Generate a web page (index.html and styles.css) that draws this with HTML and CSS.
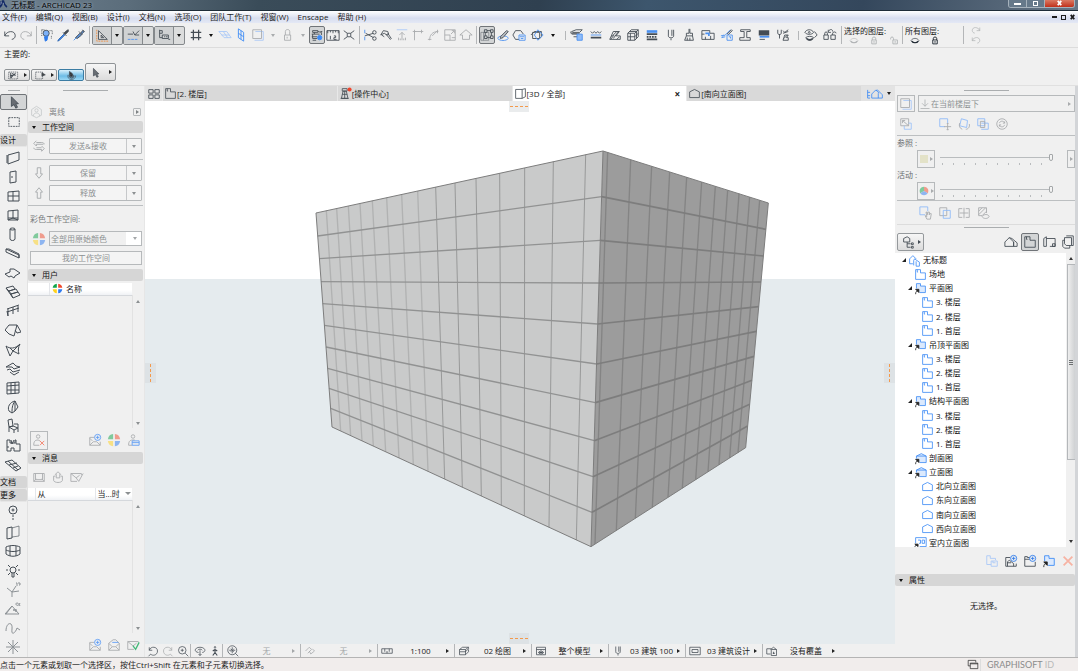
FILE: index.html
```html
<!DOCTYPE html>
<html lang="zh-CN">
<head>
<meta charset="utf-8">
<title>无标题 - ARCHICAD 23</title>
<link rel="stylesheet" href="styles.css">
</head>
<body>
<svg class="sprite" aria-hidden="true">
  <defs>
    <symbol id="undo" viewBox="0 0 16 16"><path d="M2 4v5h5M2 9c2-6 12-7 12 0 0 2-2 4-4 4"/></symbol>
    <symbol id="redo" viewBox="0 0 16 16"><path d="M14 4v5H9M14 9C12 3 2 2 2 9c0 2 2 4 4 4"/></symbol>
    <symbol id="find" viewBox="0 0 16 16"><path d="M2 2h3M11 3h3v4M2 2v8M13 9v4" stroke-dasharray="1 1"/><circle cx="7" cy="6" r="3.500" fill="#7db1f7"/><path d="M5 10l4-1-1 5-2 1z" fill="#2f7bea" stroke="#2f7bea"/></symbol>
    <symbol id="dropper" viewBox="0 0 16 16"><path d="M3 13l6-6 1 1-6 6-2 1z" fill="#3b8af5" stroke="#2a62ad"/><path d="M8 5l4 4M9 6l3-3 2-1v2l-3 3z" fill="#444c54"/></symbol>
    <symbol id="syringe" viewBox="0 0 16 16"><path d="M2 14l3-3" stroke="#3b8af5"/><path d="M4 11l5-5 2 2-5 4zM8 4l4 4M10 6l2-3 2 1-3 3M12 2l2 2" fill="#5b8fd4"/></symbol>
    <symbol id="setsquare" viewBox="0 0 16 16"><path d="M4 3v10h10zM7 8v3h3z" fill="#dddddd"/><path d="M2 2v13h13" stroke="#f28c3c" stroke-dasharray="2 1"/></symbol>
    <symbol id="snapline" viewBox="0 0 16 16"><path d="M2 7h6M8 4l2 4 5-5M10 8h5"/><path d="M2 13h12" stroke="#4a90f0" stroke-dasharray="3 1"/></symbol>
    <symbol id="coord" viewBox="0 0 16 16"><path d="M3 2v9h3M3 3h3v3H3M6 8h7v4H6zM8 10h1M10 10h2"/><path d="M13 13h2"/></symbol>
    <symbol id="grid" viewBox="0 0 16 16"><path d="M5 2v12M11 2v12M2 5h12M2 11h12" stroke-width="1.4"/></symbol>
    <symbol id="planeh" viewBox="0 0 16 16"><path d="M1 4h9l5 7H7zM4 8h9M6 4l5 7"/></symbol>
    <symbol id="planev" viewBox="0 0 16 16"><path d="M5 1l6 4v10l-6-4zM8 3v10M5 6l6 4"/></symbol>
    <symbol id="trace" viewBox="0 0 16 16"><path d="M5 4h9v10H4" stroke="#a9c8f7"/><path d="M2 2h10v10H2z"/></symbol>
    <symbol id="lock" viewBox="0 0 16 16"><path d="M4 8h7v6H4zM5 8V4c0-3 5-3 5 0v4M7 10v2"/></symbol>
    <symbol id="gravity" viewBox="0 0 16 16"><path d="M3 3h6v2H3zM9 4l4 1v3M2 7h9M3 7v5h5M2 10h6M5 5v2M12 4h2M3 14h4"/><circle cx="11" cy="11" r="2.500" fill="#3b8af5" stroke="#3b8af5"/></symbol>
    <symbol id="ruler" viewBox="0 0 16 16"><path d="M1 3h14M2 3v3M5 3v2M8 3v3M11 3v2M14 3v3M1 3v11h14V3M5 9v4M9 9h2v2H9v2h3"/></symbol>
    <symbol id="intersect" viewBox="0 0 16 16"><path d="M2 3l4 3M14 3l-4 3M2 13l4-3M14 13l-4-3M6 6h4v4H6z"/></symbol>
    <symbol id="scissors" viewBox="0 0 16 16"><path d="M2 2v4M2 10v4" stroke="#4a90f0"/><path d="M2 9l10-3M3 6l9 5"/><circle cx="13" cy="5" r="2"/><circle cx="13" cy="12" r="2"/></symbol>
    <symbol id="axe" viewBox="0 0 16 16"><path d="M2 8l3-5 5 1 1 3-2 1-3-2zM8 7l5 6 1-1-4-6M3 8l3 2"/></symbol>
    <symbol id="raise" viewBox="0 0 16 16"><path d="M2 2h12" stroke="#a9c8f7"/><path d="M8 14V5M5 8l3-3 3 3M4 14v-3M12 14v-3M6 14v-2M10 14v-2"/></symbol>
    <symbol id="corner" viewBox="0 0 16 16"><path d="M4 14V4h10M2 4h4M4 2v4M12 2v4"/></symbol>
    <symbol id="fillet" viewBox="0 0 16 16"><path d="M3 14C3 8 6 4 13 4M1 13h4M12 2v4M6 9l6-6"/></symbol>
    <symbol id="resize" viewBox="0 0 16 16"><path d="M2 2h12v12H2zM2 8h6v6M9 7l4-4M10 3h3v3M10 11h4"/></symbol>
    <symbol id="house" viewBox="0 0 16 16"><path d="M4 13V8H1l7-6 7 6h-3v5H4z"/></symbol>
    <symbol id="group" viewBox="0 0 16 16"><path d="M5 2h3v3H5zM12 2h3v3h-3zM5 9h3v3H5zM12 9h3v3h-3zM8 3h4M8 11h4M6 5v4M13 5v4"/><path d="M1 5h9v9H1zM4 5v9" opacity=".5"/></symbol>
    <symbol id="pencil3d" viewBox="0 0 16 16"><path d="M2 12c0-4 12-4 12 0M2 12c2 3 10 3 12 0" stroke="#4a90f0"/><path d="M5 10l7-7 2 1-6 7-3 1z" fill="#b8bcc0"/></symbol>
    <symbol id="polyinfo" viewBox="0 0 16 16"><path d="M8 13H4L1 8l3-5h6l3 4"/><path d="M8 8h7v6H8zM9 10h5M10 12h3" stroke="#4a90f0"/></symbol>
    <symbol id="modeldiamond" viewBox="0 0 16 16"><path d="M3 5h8v7H3zM1 8l4-4h8v6l-3 3"/><path d="M9 2l6 6-6 6-4-6z" stroke="#4a90f0"/></symbol>
    <symbol id="layers" viewBox="0 0 16 16"><path d="M2 4l5-2h7l-3 3H3zM2 7h6M4 10h4M1 4v2h10"/><path d="M8 7h6v7H8z" fill="#8fbcf9" stroke="#4a90f0"/></symbol>
    <symbol id="linetypes" viewBox="0 0 16 16"><path d="M2 4l2 2 2-2 2 2 2-2 2 2 2-2"/><path d="M2 8h12" stroke="#4a90f0"/><path d="M2 11h12" stroke-width="2"/></symbol>
    <symbol id="hatch" viewBox="0 0 16 16"><path d="M2 13l4-9h7l-4 5h5v4zM4 10l6-6M6 12l6-8M10 13l3-3M3 13l4-5"/></symbol>
    <symbol id="cube3" viewBox="0 0 16 16"><path d="M2 6l4-4h8v8l-4 4H2zM2 6h8v8M10 6l4-4M5 6v8M2 10h8l4-4M4 4h8v8"/></symbol>
    <symbol id="composite" viewBox="0 0 16 16"><path d="M2 4h12" stroke="#4a90f0" stroke-width="3"/><path d="M2 7h12M2 13h12" stroke-width="2"/><path d="M2 10h12" stroke-width="2" stroke-dasharray="2 1"/></symbol>
    <symbol id="pens" viewBox="0 0 16 16"><path d="M5 2v7c0 3 6 3 6 0V2M9 2v7M8 12v2"/></symbol>
    <symbol id="brush" viewBox="0 0 16 16"><path d="M8 1v5H5v3h7V6H9V1M5 9l-2 5h10l-1-5M6 14v-3M9 14v-3"/></symbol>
    <symbol id="zones" viewBox="0 0 16 16"><path d="M1 3h9v3h5v7H1zM1 7h3M5 13v-3M11 9v4"/><path d="M5 6h4v3" stroke="#4a90f0" stroke-width="2"/></symbol>
    <symbol id="markup" viewBox="0 0 16 16"><path d="M1 9l4-1-3 3 4-1M12 2L5 9" stroke="#4a90f0"/><path d="M8 7l5-5 1 1-5 5"/><path d="M8 8h6v6H8zM10 10h2v2" stroke="#4a90f0"/></symbol>
    <symbol id="beamprofile" viewBox="0 0 16 16"><path d="M3 2h11v2h-4v7h4v3H2v-3h5V4H3z"/></symbol>
    <symbol id="schedule" viewBox="0 0 16 16"><path d="M2 4h12M2 7h12" stroke-width="3"/><path d="M3 10h11" stroke="#4a90f0" stroke-width="2"/><path d="M3 13h6"/></symbol>
    <symbol id="override" viewBox="0 0 16 16"><path d="M2 2v4c0 2 4 2 4 0V2M4 7v5M8 3l2 2 4-3M8 6l6-2M8 14l2-6h4l-2 3h2v3zM9 12l4-4"/></symbol>
    <symbol id="eyecycle" viewBox="0 0 16 16"><path d="M1 5c2-4 8-4 10 0-2 3-8 3-10 0z"/><circle cx="6" cy="5" r="1"/><path d="M2 11c2 4 7 4 9 0-2-2-7-2-9 0zM12 4l3 4-3 3"/><path d="M3 12c2 2 5 2 7 0" stroke-width="2"/></symbol>
    <symbol id="lockcycle" viewBox="0 0 16 16"><path d="M1 8h5v5H1zM2 8V6c0-2 3-2 3 0v2M6 4c2-3 5-3 5 0M9 8h5v5H9zM11 8V6c0-2 4-2 4 0M6 2v3h3"/></symbol>
    <symbol id="eyeflat" viewBox="0 0 16 16"><path d="M1 8c3-5 11-5 14 0-3 5-11 5-14 0z"/><path d="M2 9c3 4 9 4 12 0" stroke-width="2"/></symbol>
    <symbol id="locksm" viewBox="0 0 16 16"><path d="M4 7h8v7H4zM5 7V4c0-3 6-3 6 0v3M8 9v3" stroke-width="1.6"/></symbol>
    <symbol id="unlocksm" viewBox="0 0 16 16"><path d="M6 7h8v7H6zM7 7V4c0-3-5-3-5 0v2M10 9v3" stroke-width="1.6"/></symbol>
    <symbol id="arrow" viewBox="0 0 16 16"><path d="M5 2v11l3-2 2 4 2-1-2-4h3z" fill="#686d73"/></symbol>
    <symbol id="marquee" viewBox="0 0 16 16"><path d="M2 3h12v10H2z" stroke-dasharray="2 1"/></symbol>
    <symbol id="selrect" viewBox="0 0 16 16"><path d="M1 3h13v10H1z" stroke-dasharray="2 1"/><path d="M4 4v8M6 5l5 3M4 12l3-4 4-3M3 8h4" stroke-width="1.500"/></symbol>
    <symbol id="selpoly" viewBox="0 0 16 16"><path d="M1 3h10v10H1z" stroke-dasharray="2 1"/><path d="M10 4l5 3-5 2z" fill="#444"/></symbol>
    <symbol id="orbit" viewBox="0 0 16 16"><path d="M3 7c-2 9 11 9 11 1M4 8c2 5 8 4 8 0"/><path d="M5 2l4 3 1 4-3 1-2-3z" fill="#333"/><circle cx="8" cy="9" r="3"/></symbol>
    <symbol id="wall" viewBox="0 0 16 16"><path d="M3 5l11-3v8L3 14zM2 5v8"/></symbol>
    <symbol id="door" viewBox="0 0 16 16"><path d="M5 3l6-1v11l-6 1zM6 8h2"/></symbol>
    <symbol id="window" viewBox="0 0 16 16"><path d="M3 4l11-1v10H3zM8 3v10M3 8h11"/></symbol>
    <symbol id="skylight" viewBox="0 0 16 16"><path d="M3 4l10-1v10H3zM8 3v8l-5 2M8 11l5 2M3 11h10"/></symbol>
    <symbol id="column" viewBox="0 0 16 16"><path d="M5 3v10c0 2 5 2 5 0V3"/><ellipse cx="7.500" cy="3" rx="2.500" ry="1"/></symbol>
    <symbol id="beam" viewBox="0 0 16 16"><path d="M1 3v3l13 6v-3zM1 3h3l10 5v4"/></symbol>
    <symbol id="slab" viewBox="0 0 16 16"><path d="M0 9l5-2V4h4l6 4-5 3-1 2-3-2-2 1z"/></symbol>
    <symbol id="stair" viewBox="0 0 16 16"><path d="M1 4l7-2 2 3-6 2zM4 7l7-2 2 3-7 2zM6 10l7-2 2 3-7 3zM1 4l7 10"/></symbol>
    <symbol id="railing" viewBox="0 0 16 16"><path d="M2 6l12-4M2 9l12-4M3 6v7M8 4v7M13 3v6M2 8l1 5"/></symbol>
    <symbol id="roof" viewBox="0 0 16 16"><path d="M0 8l4-5h8L9 14 4 12zM12 3l4 7-4 1-2-3"/></symbol>
    <symbol id="shell" viewBox="0 0 16 16"><path d="M1 4c4 3 9 3 14-2-2 3-2 7-1 10L8 9l-3 5zM5 6l3 3 7-7"/></symbol>
    <symbol id="morph" viewBox="0 0 16 16"><path d="M1 6l7-4 3 3 4 1-6 2-2-2zM2 9l3-1 3 3 7-2M5 11l4 3 5-3M7 6l2 2"/></symbol>
    <symbol id="curtain" viewBox="0 0 16 16"><path d="M2 3l12-1v11l-12 1zM6 3v11M10 2v12M2 6l12-1M2 10h12"/></symbol>
    <symbol id="mesh" viewBox="0 0 16 16"><path d="M4 12C2 8 5 3 10 2l3 6-3 4-3 2zM10 2c-3 4-3 8-3 12M10 2v10"/></symbol>
    <symbol id="chair" viewBox="0 0 16 16"><path d="M3 2l4-1 1 7-4 1zM4 9v5M4 9l4-1 5 2-4 2zM9 12v3M13 10v4M9 6h4v4"/></symbol>
    <symbol id="zone" viewBox="0 0 16 16"><path d="M2 2h3v3h5V2h1v4h4v7H9v-3H6v3H2zM2 9h2"/><path d="M6 2l1 4 2-4"/></symbol>
    <symbol id="terrain" viewBox="0 0 16 16"><path d="M0 5l7-2 9 8-5 3zM3 4l10 9M4 8l8-2M8 11l5-2"/></symbol>
    <symbol id="section" viewBox="0 0 16 16"><circle cx="8" cy="5" r="4"/><circle cx="8" cy="5" r="1"/><path d="M8 10v6" stroke-dasharray="2 1"/></symbol>
    <symbol id="elevation" viewBox="0 0 16 16"><path d="M2 4l5-1v11l-5 1z"/><path d="M7 4l7-2v10l-7 1" opacity=".6"/></symbol>
    <symbol id="iet" viewBox="0 0 16 16"><path d="M1 4c4-2 10-2 14 0v7c-4 3-10 3-14 0zM5 3v10M11 3v10M1 7c4 2 10 2 14 0"/></symbol>
    <symbol id="lamp" viewBox="0 0 16 16"><circle cx="8" cy="7" r="3"/><path d="M7 10v4h2v-4M1 7h2M13 7h2M3 2l2 2M13 2l-2 2M3 12l2-2M13 12l-2-2"/></symbol>
    <symbol id="leveldim" viewBox="0 0 16 16"><path d="M2 6l5 4 7-1M7 10v5M7 10l4-6M11 1h1v3M13 1h2v2h-1"/></symbol>
    <symbol id="angledim" viewBox="0 0 16 16"><path d="M0 13h14L7 5zM1 13l6-8M11 3c0-2 3-1 4 2M15 2c-1 3-4 3-4 1"/><path d="M8 9h3v2" stroke-width="1.500"/></symbol>
    <symbol id="spline" viewBox="0 0 16 16"><path d="M1 11c0-9 7-10 6-2s4 3 5-1l3 2"/></symbol>
    <symbol id="hotspot" viewBox="0 0 16 16"><path d="M8 1v14M1 8h14M3 3l10 10M13 3L3 13"/></symbol>
    <symbol id="person" viewBox="0 0 16 16"><path d="M8 1l6 4v7l-6 3-6-3V5z"/><circle cx="8" cy="6" r="2"/><path d="M4 13c0-5 8-5 8 0"/></symbol>
    <symbol id="swap" viewBox="0 0 16 16"><path d="M5 2L2 5l3 3V6h8M5 4h6c2 0 3 1 3 2M11 8l3 3-3 3v-2H5c-2 0-3-1-3-2M11 10H5"/></symbol>
    <symbol id="down" viewBox="0 0 16 16"><path d="M6 2h4v7h2l-4 5-4-5h2z"/></symbol>
    <symbol id="up" viewBox="0 0 16 16"><path d="M6 14h4V7h2L8 2 4 7h2z"/></symbol>
    <symbol id="wheel" viewBox="0 0 16 16"><g stroke="none"><path d="M7 7V1a7 7 0 0 0-6 6z" fill="#12a54a"/><path d="M9 7V1a7 7 0 0 1 6 6z" fill="#ef4a2c"/><path d="M7 9v6a7 7 0 0 1-6-6z" fill="#ffd21c"/><path d="M9 9v6a7 7 0 0 0 6-6z" fill="#2f7bf0"/></g></symbol>
    <symbol id="pie" viewBox="0 0 16 16"><g stroke="none"><path d="M8 8V1a7 7 0 0 0-6 10.500z" fill="#12a54a"/><path d="M8 8V1a7 7 0 0 1 6 10.500z" fill="#ef4a2c"/><path d="M8 8l-6 3.500a7 7 0 0 0 12 0z" fill="#2f7bf0"/></g></symbol>
    <symbol id="personx" viewBox="0 0 16 16"><circle cx="7" cy="4" r="2"/><path d="M8 14H2c0-4 1-6 5-6l2 1"/><path d="M9 9l5 5M14 9l-5 5" stroke="#f37a62"/></symbol>
    <symbol id="mailplus" viewBox="0 0 16 16"><path d="M7 5H2v9h12v-4M2 14l4-4h4l4 4M2 6l3 3"/><circle cx="11" cy="5" r="3.500" stroke="#5d9cf5"/><path d="M9 5h4M11 3v4" stroke="#5d9cf5"/></symbol>
    <symbol id="personcard" viewBox="0 0 16 16"><circle cx="8" cy="4" r="2"/><path d="M7 14H3c0-4 1-6 5-6h2"/><path d="M7 9h8v5H7zM7 11h8" stroke="#5d9cf5"/></symbol>
    <symbol id="mail" viewBox="0 0 16 16"><path d="M2 4h12v9H2zM4 4v7h8V4M2 13l3-3M14 13l-3-3"/></symbol>
    <symbol id="mailup" viewBox="0 0 16 16"><path d="M3 7h2M11 7h2v5c-1 3-9 3-10 0V7M8 2L5 5h1v4h4V5h1z"/></symbol>
    <symbol id="mailcheck" viewBox="0 0 16 16"><path d="M13 6V4H1v9h7M1 4l6 5 4-3"/><path d="M7 9l3 4 5-9"/></symbol>
    <symbol id="mailopen" viewBox="0 0 16 16"><path d="M2 6l5-4h3l4 4v8H2zM2 6l4 4h4l4-4M2 14l4-4M14 14l-4-4"/><path d="M6 5h7" stroke="#5d9cf5"/></symbol>
    <symbol id="mailok" viewBox="0 0 16 16"><path d="M14 5V4H2v9h7M2 4l6 5 4-3"/><path d="M8 9l3 4 4-8" stroke="#44b878" stroke-width="1.500"/></symbol>
    <symbol id="tiles" viewBox="0 0 16 16"><path d="M2 3h5v4H2zM9 3h5v4H9zM2 9h5v4H2zM9 9h5v4H9z"/></symbol>
    <symbol id="plan" viewBox="0 0 16 16"><path d="M2 2h6v4h6v8H2zM4 2v3h1"/></symbol>
    <symbol id="tower" viewBox="0 0 16 16"><path d="M5 5l-2 9h8L9 5zM4 2h6v3H4zM7 5v9M4 9h6M2 14h10"/><circle cx="13" cy="3" r="2.500" fill="#f0452c" stroke="none"/></symbol>
    <symbol id="box3d" viewBox="0 0 16 16"><path d="M2 3h8v11H2zM10 3l4-1v10l-4 2"/></symbol>
    <symbol id="facade" viewBox="0 0 16 16"><path d="M2 13V6l6-3 6 3v7z"/></symbol>
    <symbol id="homes" viewBox="0 0 22 16"><path d="M2 3v10h3M2 6h3M2 10h3M7 13V8l5-5 4 4M7 13h13V9l-6-6-2 1M15 7v6"/></symbol>
    <symbol id="drop" viewBox="0 0 16 16"><path d="M8 2v9M4 7l4 4 4-4M2 14h12"/></symbol>
    <symbol id="expand" viewBox="0 0 16 16"><path d="M2 2h9v8H2zM4 4l7 6M4 4h3M4 4v3"/><path d="M6 10v4h8V7h-3" stroke="#9dc2f8"/></symbol>
    <symbol id="moveref" viewBox="0 0 16 16"><path d="M8 11H2V2h9v5" stroke="#8eb9f8"/><path d="M11 7v8M7 11h8M10 8l1-1 1 1M10 14l1 1 1-1"/></symbol>
    <symbol id="rotref" viewBox="0 0 16 16"><path d="M5 2l7 2-1 8-8-2z" stroke="#8eb9f8"/><path d="M10 14c3 0 5-3 4-6M3 7c-1 3 0 6 3 7"/></symbol>
    <symbol id="copyref" viewBox="0 0 16 16"><path d="M2 2h8v8H2zM6 7h8v7H6" stroke="#8eb9f8"/><path d="M5 5h5v7H5z"/></symbol>
    <symbol id="refresh" viewBox="0 0 16 16"><circle cx="8" cy="8" r="6"/><path d="M5 7c1-3 5-3 6 0M11 5v2H9M11 9c-1 3-5 3-6 0M5 11V9h2"/></symbol>
    <symbol id="handref" viewBox="0 0 16 16"><path d="M7 10H1V1h9v5" stroke="#8eb9f8"/><path d="M7 11l2 4h4l1-6-1-1-1 2V7h-2v3L9 7H8l1 5z"/></symbol>
    <symbol id="overlap" viewBox="0 0 16 16"><path d="M2 2h8v9H2z"/><path d="M6 5h8v9H6z" stroke="#8eb9f8"/></symbol>
    <symbol id="split" viewBox="0 0 16 16"><path d="M6 3H2v10h4M10 3h4v10h-4M8 2v12M3 8h10"/></symbol>
    <symbol id="masked" viewBox="0 0 16 16"><path d="M3 2h9v6M3 2v9h4M3 6l4-4M3 10l8-8M12 6l-5 5M7 12c2-3 7-3 8 0-1 3-7 3-8 0z"/></symbol>
    <symbol id="navtree" viewBox="0 0 16 16"><path d="M3 8V4l4-2 3 2v4zM7 8v6h4M7 10h4M12 9h2v2h-2zM12 13h2v2h-2z"/></symbol>
    <symbol id="projmap" viewBox="0 0 16 16"><path d="M1 13V8l5-5 5 5v5zM6 3l3 1 6 5v4h-4M11 8v5"/></symbol>
    <symbol id="layout" viewBox="0 0 16 16"><path d="M5 13H2V4l3-2v11M5 4h10v9H9M12 13h3v-3h-3z"/></symbol>
    <symbol id="publish" viewBox="0 0 16 16"><path d="M4 3h8v9H6L4 10zM6 1h8v11h-2M4 6H2v7l2 2h6v-3"/></symbol>
    <symbol id="project" viewBox="0 0 16 16"><path d="M2 12V6l4-4 4 4M2 12h4M7 14V8l1-2 6 4v5h-4V9"/></symbol>
    <symbol id="folderplan" viewBox="0 0 16 16"><path d="M3 8V2h5v3h6v8H7" fill="#dbe9fd"/><path d="M2 15c0-3 1-4 3-4" stroke="#222"/><path d="M2 9h4v4z" fill="#222" stroke="#222"/></symbol>
    <symbol id="foldersec" viewBox="0 0 16 16"><path d="M3 8V5l6-3 6 3v8H7M3 5h12" fill="#dbe9fd"/><path d="M2 15c0-3 1-4 3-4" stroke="#222"/><path d="M2 9h4v4z" fill="#222" stroke="#222"/></symbol>
    <symbol id="folderint" viewBox="0 0 16 16"><path d="M2 9V2h13v11H7M5 5h3v4H6M10 5h3v4h-3z"/><path d="M1 15c0-3 1-4 3-4" stroke="#222"/><path d="M1 10h4v3z" fill="#222" stroke="#222"/></symbol>
    <symbol id="clone" viewBox="0 0 16 16"><path d="M7 12H2V2h4v3h6v2M7 8h7v6H7zM9 8v2h3"/></symbol>
    <symbol id="newview" viewBox="0 0 16 16"><path d="M7 4H2v10h12v-3M4 14V9l2-2 5 4v3M4 10h4"/><circle cx="11" cy="5" r="3.500" fill="#f0f0f0" stroke="#2f7bea"/><path d="M9 5h4M11 3v4" stroke="#2f7bea"/></symbol>
    <symbol id="newfolder" viewBox="0 0 16 16"><path d="M8 4H5V3H2v11h12V9M2 6h6"/><circle cx="11" cy="5" r="3.500" fill="#f0f0f0" stroke="#2f7bea"/><path d="M9 5h4M11 3v4" stroke="#2f7bea"/></symbol>
    <symbol id="delete" viewBox="0 0 16 16"><path d="M3 3l10 10M13 3L3 13" stroke-width="2"/></symbol>
    <symbol id="zoomin" viewBox="0 0 16 16"><circle cx="7" cy="7" r="5"/><path d="M11 11l4 4M5 7h4M7 5v4"/></symbol>
    <symbol id="prevview" viewBox="0 0 16 16"><path d="M3 3v4h4M3 7c2-6 11-5 11 1s-7 7-9 4"/><path d="M5 12l-3 3"/></symbol>
    <symbol id="nextview" viewBox="0 0 16 16"><path d="M13 3v4H9M13 7C11 1 2 2 2 8s7 7 9 4M11 12l3 3"/></symbol>
    <symbol id="lookaround" viewBox="0 0 16 16"><path d="M6 10C-1 9 1 3 8 3s9 6 3 7M5 7c1-2 5-2 6 0M8 7v7M6 12l2 2 2-2"/></symbol>
    <symbol id="walk" viewBox="0 0 16 16"><circle cx="8" cy="3" r="1"/><path d="M8 5v5l-3 4M8 10l3 4M5 8l3-2 3 2" stroke-width="1.500"/></symbol>
    <symbol id="fit" viewBox="0 0 16 16"><circle cx="7" cy="7" r="6"/><path d="M11 11l4 4M7 3v3M7 8v3M3 7h3M8 7h3M5 5l4 4M9 5L5 9"/></symbol>
    <symbol id="angle" viewBox="0 0 16 16"><path d="M2 8l5-5 3 3-5 5M9 12l5-4-3-3M7 8l2 4"/></symbol>
    <symbol id="scale" viewBox="0 0 16 16"><path d="M1 5h14v6H1zM5 5v4M8 8v3M11 5v4"/></symbol>
    <symbol id="stack" viewBox="0 0 16 16"><path d="M2 6l4-3h8l-4 3zM2 6v3h8l4-4V3M2 9v4h8l4-4V6M10 6v7"/></symbol>
    <symbol id="partial" viewBox="0 0 16 16"><path d="M2 3h12v10H2zM2 6h12M5 8l6 4M11 8l-6 4M4 10h8M8 6v7"/></symbol>
    <symbol id="mvo" viewBox="0 0 16 16"><path d="M1 3h14v10H1zM4 6h8v4H4z"/></symbol>
    <symbol id="goverride" viewBox="0 0 16 16"><path d="M6 12H1V5h6M6 6l4-3 4 3H7v8h7V6M10 9v3M9 11h3"/></symbol>
    <symbol id="windows" viewBox="0 0 16 16"><path d="M1 2h11v3M1 2v8h3M4 6h11v8H4zM4 7h11"/></symbol>
    <symbol id="cross" viewBox="0 0 8 8"><path d="M2 1l4 5M6 1L2 6" stroke-width="2"/></symbol>
    <symbol id="logo" viewBox="0 0 16 16"><path d="M0 0v12c4-1 4-7 5-12h2c1 6 2 9 7 12" fill="#eef3fa" stroke="#132a66" stroke-width="3"/></symbol>
  </defs>
</svg>

<div class="app">
  <header class="titlebar">
    <svg class="logo"><use href="#logo"/></svg>
    <span class="title">无标题 - ARCHICAD 23</span>
    <div class="winbtns"><button aria-label="最小化"><i class="min"></i></button><button aria-label="最大化"><i class="max"></i></button><button class="close" aria-label="关闭"><svg><use href="#cross"/></svg></button></div>
  </header>

  <nav class="menubar">
    <a href="#">文件(F)</a><a href="#">编辑(Q)</a><a href="#">视图(B)</a><a href="#">设计(I)</a><a href="#">文档(N)</a><a href="#">选项(O)</a><a href="#">团队工作(T)</a><a href="#">视窗(W)</a><a href="#">Enscape</a><a href="#">帮助 (H)</a>
    <div class="docbtns"><button aria-label="最小化文档"><i class="min"></i></button><button aria-label="还原文档"><i class="max"></i></button><button aria-label="关闭文档"><svg><use href="#cross"/></svg></button></div>
  </nav>

  <div class="toolbar">
    <button class="ic" aria-label="撤销"><svg><use href="#undo"/></svg></button>
    <button class="ic dim" aria-label="重做"><svg><use href="#redo"/></svg></button>
    <i class="sep"></i>
    <button class="ic" aria-label="查找选择"><svg><use href="#find"/></svg></button>
    <button class="ic" aria-label="拾取参数"><svg><use href="#dropper"/></svg></button>
    <button class="ic" aria-label="注入参数"><svg><use href="#syringe"/></svg></button>
    <i class="sep"></i>
    <div class="split"><button class="main" aria-label="辅助线"><svg><use href="#setsquare"/></svg></button><button class="dd" aria-label="辅助线选项"><i class="tri"></i></button></div>
    <div class="split"><button class="main" aria-label="捕捉参照"><svg><use href="#snapline"/></svg></button><button class="dd" aria-label="捕捉选项"><i class="tri"></i></button></div>
    <div class="split"><button class="main" aria-label="追踪器"><svg><use href="#coord"/></svg></button><button class="dd" aria-label="追踪器选项"><i class="tri"></i></button></div>
    <button class="ic mid first" aria-label="网格捕捉"><svg><use href="#grid"/></svg></button>
    <button class="arr" aria-label="网格选项"><i class="tri"></i></button>
    <button class="ic pale" aria-label="编辑平面"><svg><use href="#planeh"/></svg></button>
    <button class="ic blue" aria-label="竖直平面"><svg><use href="#planev"/></svg></button>
    <button class="ic mid dim" aria-label="描绘参照"><svg><use href="#trace"/></svg></button>
    <button class="arr dim" aria-label="描绘选项"><i class="tri"></i></button>
    <button class="ic mid dim" aria-label="锁定"><svg><use href="#lock"/></svg></button>
    <button class="arr dim" aria-label="锁定选项"><i class="tri"></i></button>
    <button class="ic on" aria-label="重力"><svg><use href="#gravity"/></svg></button>
    <button class="ic" aria-label="测量"><svg><use href="#ruler"/></svg></button>
    <button class="ic" aria-label="相交"><svg><use href="#intersect"/></svg></button>
    <i class="sep"></i>
    <button class="ic" aria-label="分割"><svg><use href="#scissors"/></svg></button>
    <button class="ic" aria-label="修剪"><svg><use href="#axe"/></svg></button>
    <button class="ic dim" aria-label="调整"><svg><use href="#raise"/></svg></button>
    <button class="ic dim" aria-label="相交角"><svg><use href="#corner"/></svg></button>
    <button class="ic dim" aria-label="圆角"><svg><use href="#fillet"/></svg></button>
    <button class="ic dim" aria-label="调整大小"><svg><use href="#resize"/></svg></button>
    <button class="ic dim" aria-label="屋顶修剪"><svg><use href="#house"/></svg></button>
    <i class="sep"></i>
    <button class="ic on" aria-label="暂停组"><svg><use href="#group"/></svg></button>
    <button class="ic" aria-label="编辑"><svg><use href="#pencil3d"/></svg></button>
    <button class="ic" aria-label="元素信息"><svg><use href="#polyinfo"/></svg></button>
    <button class="ic big" aria-label="三维剖切"><svg><use href="#modeldiamond"/></svg></button>
    <button class="arr" aria-label="剖切选项"><i class="tri"></i></button>
    <i class="sep short"></i>
    <div class="attrs">
      <button class="ic" aria-label="图层"><svg><use href="#layers"/></svg></button>
      <button class="ic" aria-label="线型"><svg><use href="#linetypes"/></svg></button>
      <button class="ic" aria-label="填充"><svg><use href="#hatch"/></svg></button>
      <button class="ic" aria-label="建筑材料"><svg><use href="#cube3"/></svg></button>
      <button class="ic" aria-label="复合结构"><svg><use href="#composite"/></svg></button>
      <button class="ic" aria-label="画笔"><svg><use href="#pens"/></svg></button>
      <button class="ic" aria-label="表面"><svg><use href="#brush"/></svg></button>
      <button class="ic" aria-label="区域类别"><svg><use href="#zones"/></svg></button>
      <button class="ic" aria-label="标注"><svg><use href="#markup"/></svg></button>
      <button class="ic" aria-label="截面"><svg><use href="#beamprofile"/></svg></button>
      <button class="ic" aria-label="清单"><svg><use href="#schedule"/></svg></button>
      <button class="ic" aria-label="图形覆盖"><svg><use href="#override"/></svg></button>
    </div>
    <i class="sep short"></i>
    <button class="ic wide" aria-label="切换可见"><svg><use href="#eyecycle"/></svg></button>
    <button class="ic wide" aria-label="切换锁定"><svg><use href="#lockcycle"/></svg></button>
    <i class="sep"></i>
    <div class="layerbox"><span>选择的图层:</span><div class="row dim"><button aria-label="隐藏图层"><svg><use href="#eyeflat"/></svg></button><button aria-label="锁定图层"><svg><use href="#locksm"/></svg></button><button aria-label="解锁图层"><svg><use href="#unlocksm"/></svg></button></div></div>
    <i class="sep"></i>
    <div class="layerbox"><span>所有图层:</span><div class="row"><button aria-label="显示全部图层"><svg><use href="#eyeflat"/></svg></button><button aria-label="锁定全部图层"><svg><use href="#locksm"/></svg></button></div></div>
    <i class="sep"></i>
    <div class="redocol dim"><button aria-label="图层重做"><svg><use href="#redo"/></svg></button><button aria-label="图层撤销"><svg><use href="#undo"/></svg></button></div>
  </div>

  <div class="infobar">
    <span>主要的:</span>
    <div class="inforow">
      <button aria-label="选择方式"><svg><use href="#selrect"/></svg><i class="tri right"></i></button>
      <button aria-label="选框方式"><svg><use href="#selpoly"/></svg><i class="tri right"></i></button>
      <button class="hot" aria-label="快速选择"><svg><use href="#orbit"/></svg></button>
      <button class="tall" aria-label="箭头"><svg><use href="#arrow"/></svg><i class="tri right"></i></button>
    </div>
  </div>

  <main class="work">
    <aside class="toolbox">
      <i class="grip"></i>
      <button class="on" aria-label="箭头工具"><svg><use href="#arrow"/></svg></button>
      <button class="mq" aria-label="选取框"><svg><use href="#marquee"/></svg></button>
      <h3>设计</h3>
      <div class="tools design">
        <button aria-label="墙"><svg><use href="#wall"/></svg></button>
        <button aria-label="门"><svg><use href="#door"/></svg></button>
        <button aria-label="窗"><svg><use href="#window"/></svg></button>
        <button aria-label="天窗"><svg><use href="#skylight"/></svg></button>
        <button aria-label="柱"><svg><use href="#column"/></svg></button>
        <button aria-label="梁"><svg><use href="#beam"/></svg></button>
        <button aria-label="板"><svg><use href="#slab"/></svg></button>
        <button aria-label="楼梯"><svg><use href="#stair"/></svg></button>
        <button aria-label="栏杆"><svg><use href="#railing"/></svg></button>
        <button aria-label="屋顶"><svg><use href="#roof"/></svg></button>
        <button aria-label="壳体"><svg><use href="#shell"/></svg></button>
        <button aria-label="变形体"><svg><use href="#morph"/></svg></button>
        <button aria-label="幕墙"><svg><use href="#curtain"/></svg></button>
        <button aria-label="曲面"><svg><use href="#mesh"/></svg></button>
        <button aria-label="对象"><svg><use href="#chair"/></svg></button>
        <button aria-label="区域"><svg><use href="#zone"/></svg></button>
        <button aria-label="网面"><svg><use href="#terrain"/></svg></button>
      </div>
      <h3>文档</h3>
      <h3>更多</h3>
      <div class="tools more">
        <button aria-label="轴网"><svg><use href="#section"/></svg></button>
        <button aria-label="端墙"><svg><use href="#elevation"/></svg></button>
        <button aria-label="角窗"><svg><use href="#iet"/></svg></button>
        <button aria-label="灯"><svg><use href="#lamp"/></svg></button>
        <button class="soft" aria-label="半径标注"><svg><use href="#leveldim"/></svg></button>
        <button class="soft" aria-label="角度标注"><svg><use href="#angledim"/></svg></button>
        <button class="soft" aria-label="样条"><svg><use href="#spline"/></svg></button>
        <button class="soft" aria-label="热点"><svg><use href="#hotspot"/></svg></button>
      </div>
    </aside>

    <aside class="team">
      <i class="grip"></i>
      <div class="online dim"><svg><use href="#person"/></svg><span>离线</span><button aria-label="展开"><i class="tri right"></i></button></div>
      <h3><i class="tri"></i>工作空间</h3>
      <div class="wrow dim"><svg><use href="#swap"/></svg><div class="combo"><button>发送&amp;接收</button><button aria-label="发送选项"><i class="tri"></i></button></div></div>
      <hr>
      <div class="wrow second dim"><svg><use href="#down"/></svg><div class="combo"><button>保留</button><button aria-label="保留选项"><i class="tri"></i></button></div></div>
      <div class="wrow tight dim"><svg><use href="#up"/></svg><div class="combo"><button>释放</button><button aria-label="释放选项"><i class="tri"></i></button></div></div>
      <hr>
      <label class="lbl" for="color">彩色工作空间:</label>
      <div class="wrow tight dim"><svg class="fade"><use href="#wheel"/></svg><div class="selwrap"><select id="color"><option>全部用原始颜色</option></select><i class="tri"></i></div></div>
      <button class="mine">我的工作空间</button>
      <h3><i class="tri"></i>用户</h3>
      <div class="list">
        <table><thead><tr><th class="c1"></th><th class="c2"><svg><use href="#wheel"/></svg></th><th>名称</th></tr></thead></table>
        <div class="scroll"><i class="tri upw"></i><i class="tri"></i></div>
      </div>
      <div class="acts dim"><button class="boxed" aria-label="移除用户"><svg><use href="#personx"/></svg></button><button class="push" aria-label="新消息"><svg><use href="#mailplus"/></svg></button><button aria-label="颜色"><svg class="fade"><use href="#wheel"/></svg></button><button aria-label="用户信息"><svg><use href="#personcard"/></svg></button></div>
      <h3><i class="tri"></i>消息</h3>
      <div class="msgs dim"><button aria-label="消息"><svg><use href="#mail"/></svg></button><button aria-label="发出"><svg><use href="#mailup"/></svg></button><button aria-label="完成"><svg><use href="#mailcheck"/></svg></button></div>
      <div class="list">
        <table><thead><tr><th class="c0"></th><th>从</th><th class="c3">当...时 <i class="tri"></i></th></tr></thead></table>
        <div class="scroll"><i class="tri upw"></i><i class="tri"></i></div>
      </div>
      <div class="acts dim"><button class="push" aria-label="新建消息"><svg><use href="#mailplus"/></svg></button><button aria-label="回复"><svg><use href="#mailopen"/></svg></button><button aria-label="标记完成"><svg><use href="#mailok"/></svg></button></div>
    </aside>

    <section class="center">
      <div class="tabs">
        <button class="tiles" aria-label="标签概览"><svg><use href="#tiles"/></svg></button>
        <button class="tab"><svg><use href="#plan"/></svg>[2. 楼层]</button>
        <button class="tab"><svg><use href="#tower"/></svg>[操作中心]</button>
        <button class="tab active"><svg><use href="#box3d"/></svg>[3D / 全部]<span class="x">×</span></button>
        <button class="tab"><svg><use href="#facade"/></svg>[南向立面图]</button>
        <button class="views blue" aria-label="视图列表"><svg><use href="#homes"/></svg><i class="tri"></i></button>
      </div>
      <div class="canvas">
        <svg class="model" viewBox="0 0 750 543" role="img" aria-label="三维模型">
          <g transform="translate(155 39) scale(.33333)">
            <path class="faceL" d="M48 219L909 33L873 1220L96 861Z"/>
            <path class="faceR" d="M909 33L1405 189L1337 923L873 1220Z"/>
            <path class="gl far" d="M79 212L122 873M110 206L152 887M145 198L186 903M180 190L220 918M217 182L257 935M260 173L297 954M305 163L340 974M353 153L384 994"/>
            <path class="gl" d="M407 141L434 1017M465 129L487 1042M528 115L544 1068M599 100L604 1096M674 84L673 1128M760 65L747 1162M857 44L829 1200"/>
            <path class="gl h" d="M53 288L905 170M58 356L901 301M63 425L897 429M68 491L893 552M73 556L890 672M78 621L886 788M83 685L883 902M87 745L879 1010M92 805L876 1117"/>
            <path class="gr" d="M923 37L885 1212M992 59L949 1171M1055 79L1006 1135M1109 96L1057 1102M1160 112L1104 1072M1205 126L1147 1045M1246 139L1187 1019M1283 151L1224 995M1317 161L1257 974M1349 171L1289 954M1379 181L1314 938"/>
            <path class="gr h" d="M905 170L1398 268M901 301L1390 348M897 429L1383 426M893 552L1376 500M890 672L1369 574M886 788L1362 649M883 902L1356 721M879 1010L1349 793M876 1117L1343 858"/>
            <path class="edge" d="M48 219L909 33L1405 189L1337 923L873 1220L96 861ZM909 33L873 1220"/>
          </g>
        </svg>
        <i class="handle top"></i><i class="handle bottom"></i><i class="handle left"></i><i class="handle rt"></i>
      </div>
      <div class="viewbar">
        <button class="vi" aria-label="上一视图"><svg><use href="#prevview"/></svg></button>
        <button class="vi dim" aria-label="下一视图"><svg><use href="#nextview"/></svg></button>
        <button class="vi" aria-label="放大"><svg><use href="#zoomin"/></svg></button>
        <i class="sep"></i>
        <button class="vi" aria-label="环视"><svg><use href="#lookaround"/></svg></button>
        <button class="vi" aria-label="行走"><svg><use href="#walk"/></svg></button>
        <i class="sep"></i>
        <button class="opt dim"><svg class="strong"><use href="#fit"/></svg><span>无</span><i class="tri right"></i></button>
        <button class="opt dim"><svg><use href="#angle"/></svg><span>无</span><i class="tri right"></i></button>
        <button class="opt"><svg><use href="#scale"/></svg><span>1:100</span><i class="tri right"></i></button>
        <button class="opt"><svg><use href="#stack"/></svg><span>02 绘图</span><i class="tri right"></i></button>
        <button class="opt"><svg><use href="#partial"/></svg><span>整个模型</span><i class="tri right"></i></button>
        <button class="opt"><svg><use href="#pens"/></svg><span>03 建筑 100</span><i class="tri right"></i></button>
        <button class="opt"><svg><use href="#mvo"/></svg><span>03 建筑设计</span><i class="tri right"></i></button>
        <button class="opt"><svg><use href="#goverride"/></svg><span>没有覆盖</span><i class="tri right"></i></button>
      </div>
    </section>

    <aside class="nav">
      <i class="grip"></i>
      <div class="refrow dim"><button class="sq" aria-label="描绘"><svg><use href="#trace"/></svg></button><button class="ref"><svg><use href="#drop"/></svg><span>在当前楼层下</span><i class="tri right"></i></button></div>
      <div class="ricons dim"><button class="gapafter" aria-label="切换"><svg><use href="#expand"/></svg></button><button aria-label="移动参照"><svg><use href="#moveref"/></svg></button><button aria-label="旋转参照"><svg><use href="#rotref"/></svg></button><button aria-label="复制参照"><svg><use href="#copyref"/></svg></button><button aria-label="重建参照"><svg><use href="#refresh"/></svg></button></div>
      <hr>
      <label class="lbl" for="s1">参照 :</label>
      <div class="slrow dim"><button aria-label="参照颜色"><i class="sw"></i><i class="tri right"></i></button><div class="sl"><input id="s1" type="range" value="100"><div class="ticks"></div></div><button class="thin" aria-label="更多"><i class="tri right"></i></button></div>
      <label class="lbl" for="s2">活动 :</label>
      <div class="slrow dim"><button aria-label="活动颜色"><svg class="fade"><use href="#pie"/></svg><i class="tri right"></i></button><div class="sl"><input id="s2" type="range" value="100"><div class="ticks"></div></div></div>
      <hr>
      <div class="ricons second dim"><button aria-label="拖移"><svg><use href="#handref"/></svg></button><button aria-label="重叠"><svg><use href="#overlap"/></svg></button><button aria-label="分屏"><svg><use href="#split"/></svg></button><button aria-label="遮罩"><svg><use href="#masked"/></svg></button></div>
      <div class="divider"><i class="grip"></i></div>
      <div class="navhead"><button class="chooser" aria-label="选择项目"><svg><use href="#navtree"/></svg><i class="tri right"></i></button><button class="push" aria-label="项目树状图"><svg><use href="#projmap"/></svg></button><button class="on" aria-label="视图映射"><svg><use href="#plan"/></svg></button><button aria-label="图册"><svg><use href="#layout"/></svg></button><button aria-label="发布器"><svg><use href="#publish"/></svg></button></div>
      <div class="treebox">
        <ul class="tree">
          <li class="l0 open"><svg><use href="#project"/></svg>无标题</li>
          <li class="l1"><svg><use href="#plan"/></svg>场地</li>
          <li class="l1 open"><svg><use href="#folderplan"/></svg>平面图</li>
          <li class="l2"><svg><use href="#plan"/></svg>3. 楼层</li>
          <li class="l2"><svg><use href="#plan"/></svg>2. 楼层</li>
          <li class="l2"><svg><use href="#plan"/></svg>1. 首层</li>
          <li class="l1 open"><svg><use href="#folderplan"/></svg>吊顶平面图</li>
          <li class="l2"><svg><use href="#plan"/></svg>3. 楼层</li>
          <li class="l2"><svg><use href="#plan"/></svg>2. 楼层</li>
          <li class="l2"><svg><use href="#plan"/></svg>1. 首层</li>
          <li class="l1 open"><svg><use href="#folderplan"/></svg>结构平面图</li>
          <li class="l2"><svg><use href="#plan"/></svg>3. 楼层</li>
          <li class="l2"><svg><use href="#plan"/></svg>2. 楼层</li>
          <li class="l2"><svg><use href="#plan"/></svg>1. 首层</li>
          <li class="l1"><svg><use href="#foldersec"/></svg>剖面图</li>
          <li class="l1 open"><svg><use href="#foldersec"/></svg>立面图</li>
          <li class="l2"><svg><use href="#facade"/></svg>北向立面图</li>
          <li class="l2"><svg><use href="#facade"/></svg>东向立面图</li>
          <li class="l2"><svg><use href="#facade"/></svg>南向立面图</li>
          <li class="l2"><svg><use href="#facade"/></svg>西向立面图</li>
          <li class="l1"><svg><use href="#folderint"/></svg>室内立面图</li>
        </ul>
        <div class="vscroll"><i class="tri upw"></i><div class="thumb"></div><i class="tri"></i></div>
      </div>
      <div class="navacts"><button class="pale" aria-label="克隆"><svg><use href="#clone"/></svg></button><button aria-label="新建视图"><svg><use href="#newview"/></svg></button><button aria-label="新建文件夹"><svg><use href="#newfolder"/></svg></button><button class="blue" aria-label="保存视图"><svg><use href="#folderplan"/></svg></button><button class="red" aria-label="删除"><svg><use href="#delete"/></svg></button></div>
      <h3><i class="tri"></i>属性</h3>
      <p class="none">无选择。</p>
    </aside>
  </main>

  <footer class="status">
    <span>点击一个元素或划取一个选择区，按住Ctrl+Shift 在元素和子元素切换选择。</span>
    <svg><use href="#windows"/></svg>
    <span class="gid">GRAPHISOFT <b>ID</b></span>
  </footer>
</div>
</body>
</html>
```
FILE: styles.css
```css
* { box-sizing: border-box; }
html, body { height: 100%; }
body {
  margin: 0;
  background: #f0f0f0;
  color: #1c1c1c;
  font: 8px/12px "Open Sans", "Noto Sans CJK SC", sans-serif;
  overflow: hidden;
}
button, select, input { font: inherit; color: inherit; margin: 0; }
button { border: 0; padding: 0; background: none; display: flex; align-items: center; justify-content: center; white-space: nowrap; }
svg { width: 14px; height: 14px; fill: none; stroke: currentColor; stroke-width: 1; flex: none; display: block; }
.sprite { position: absolute; width: 0; height: 0; }
h3, p, ul { margin: 0; padding: 0; font-size: 8px; font-weight: 400; }
i { font-style: normal; }
hr { border: 0; height: 1px; background: #bcbfc1; margin: 0; flex: none; }

.tri { width: 0; height: 0; border: 3px solid transparent; border-top: 3px solid currentColor; border-bottom: 0; flex: none; }
.tri.right { border: 3px solid transparent; border-left: 3px solid currentColor; border-right: 0; }
.tri.upw { border: 3px solid transparent; border-bottom: 3px solid currentColor; border-top: 0; }
.dim { color: #a9acae; }
.blue { color: #3b8af5; }
.pale { color: #a9c8f7; }
.red { color: #f7b3a3; }
.fade { opacity: .5; }

.app { height: 100vh; display: flex; flex-direction: column; }

.titlebar { height: 11px; flex: none; display: flex; align-items: flex-start; background: linear-gradient(100deg, #6f8190 0, #5b6d7b 12%, #3a4c59 24%, #2f4050 50%, #3d566d 60%, #34475c 80%, #667686 100%); border-bottom: 1px solid #1f2d38; }
.titlebar .logo { width: 8px; height: 10px; }
.title { color: #000; margin-left: 3px; line-height: 10px; text-shadow: 0 0 3px #b9c6d0; }
.winbtns { margin: 0 3px 0 auto; display: flex; height: 8px; border: 1px solid #a6b2bc; border-top: 0; border-radius: 0 0 3px 3px; overflow: hidden; }
.winbtns button { width: 18px; color: #fff; background: #66798a; border-right: 1px solid #a6b2bc; }
.winbtns .close { width: 29px; background: linear-gradient(#da7a63, #c1301a); border: 0; }
.winbtns svg, .docbtns svg { width: 7px; height: 7px; }
.min { width: 7px; height: 2px; background: currentColor; }
.max { width: 5px; height: 5px; border: 1px solid currentColor; }

.menubar { height: 12px; flex: none; display: flex; align-items: center; gap: 9px; padding-left: 2px; background: linear-gradient(#fff, #d8deef 60%, #e4e8f5); }
.menubar a { color: #1c1c1c; text-decoration: none; white-space: nowrap; }
.docbtns { margin-left: auto; display: flex; gap: 3px; padding-right: 3px; }
.docbtns button { width: 6px; height: 8px; }
.docbtns .min { width: 5px; }

.toolbar { height: 25px; flex: none; display: flex; align-items: center; padding-left: 2px; border-bottom: 1px solid #dcdcdc; color: #444c54; }
.toolbar > * { flex: none; }
.ic { width: 16px; height: 18px; }
.ic.mid { width: 18px; }
.ic.mid.first { margin-left: 2px; }
.ic.big { width: 20px; }
.ic.wide { width: 19px; }
.arr { width: 12px; height: 18px; }
.arr .tri, .split .tri { border-width: 3px 2px 0; }
.arr:not(.dim) .tri, .split .tri { color: #111; }
.on { border: 1px solid #707478; border-radius: 2px; background: #d3d5d6; }
.sep { width: 1px; height: 18px; background: #b4b6b8; margin: 0 2px; flex: none; }
.sep.short { height: 9px; margin: 0 2px 0 6px; }
.split { display: flex; width: 31px; height: 19px; border: 1px solid #85898c; border-radius: 2px; background: #dcdddd; }
.split .main { width: 19px; background: #d0d2d3; border-right: 1px solid #85898c; }
.split .dd { flex: 1; }
.attrs { display: grid; grid-template-columns: repeat(12, 1fr); width: 224px; justify-items: center; }
.layerbox { width: 56px; line-height: 10px; color: #1c1c1c; white-space: nowrap; }
.layerbox .row { display: flex; gap: 8px; padding-left: 4px; }
.layerbox .row:not(.dim) { color: #1c2630; }
.layerbox button { width: 12px; height: 8px; }
.layerbox svg { width: 10px; height: 9px; }
.layerbox .row.dim { color: #b0b3b5; }
.redocol { padding-left: 5px; }
.redocol svg { width: 10px; height: 10px; }

.infobar { height: 38px; flex: none; padding-left: 4px; border-bottom: 1px solid #e0e0e0; display: flex; flex-direction: column; justify-content: space-between; padding-bottom: 4px; }
.infobar > span { line-height: 11px; }
.inforow { display: flex; gap: 1px; align-items: flex-end; margin-top: -3px; color: #444c54; }
.inforow button { width: 26px; height: 12px; border: 1px solid #8f9396; border-radius: 2px; background: linear-gradient(#f6f6f6, #dcdcdc); gap: 4px; }
.inforow svg { width: 13px; height: 11px; }
.inforow .tri { color: #222; border-width: 2px 0 2px 3px; }
.inforow .hot { background: linear-gradient(#d9f0fb, #6dbce6 60%, #9bd8f5); border-color: #3b7ca3; }
.inforow .tall { width: 31px; height: 18px; gap: 7px; }

.work { flex: 1; min-height: 0; display: grid; grid-template-columns: 28px 117px minmax(0, 1fr) 183px; }
.grip { display: block; height: 1px; width: 45px; background: #aaadaf; margin: 4px auto 0; flex: none; }
aside h3 { height: 12px; line-height: 12px; background: #d6d6d6; flex: none; display: flex; align-items: center; color: #111; border-radius: 2px; white-space: nowrap; }
aside h3 .tri { margin: 0 6px 0 4px; border-width: 3px 2px 0; }

.toolbox { display: flex; flex-direction: column; border-right: 1px solid #e2e2e2; color: #444c54; min-height: 0; }
.toolbox .grip { width: 12px; margin-bottom: 3px; }
.toolbox > button { height: 16px; flex: none; width: 27px; }
.toolbox .mq { height: 24px; }
.tools { display: flex; flex-direction: column; min-height: 0; flex: 8; padding-top: 1px; }
.tools.design { flex: 17; margin-bottom: 2px; }
.tools button { flex: 1; min-height: 0; width: 26px; }
.tools svg { width: 16px; height: 16px; }
.tools .soft { color: #8d9296; }
.toolbox h3 { height: 13px; border-bottom: 1px solid #e6e6e6; }

.team { display: flex; flex-direction: column; border-right: 1px solid #e6e6e6; min-height: 0; padding-right: 1px; }
.team .grip { margin-bottom: 14px; }
.online { display: flex; align-items: center; height: 14px; padding: 0 2px; gap: 6px; color: #7e8284; flex: none; margin-bottom: 2px; }
.online svg { color: #c4c7c9; width: 13px; }
.online button { margin-left: auto; width: 8px; height: 8px; border: 1px solid #b5b8ba; border-radius: 1px; }
.online .tri { border-width: 2px 0 2px 3px; }
.wrow { display: flex; align-items: center; gap: 3px; padding: 0 1px 0 4px; margin: 5px 0; flex: none; color: #a4a7a9; }
.wrow.second { margin: 5px 0 4px; }
.wrow.tight { margin: 0 0 4px; }
.combo { flex: 1; height: 16px; display: flex; border: 1px solid #b6b9bb; border-radius: 1px; background: #f4f4f4; color: #8c9092; }
.combo button { flex: 1; }
.combo button + button { flex: none; width: 15px; border-left: 1px solid #c6c8ca; }
.wrow .tri { border-width: 3px 2px 0; }
.team .lbl { color: #777b7d; padding: 7px 0 6px 2px; flex: none; }
.selwrap { flex: 1; display: flex; align-items: center; border: 1px solid #b6b9bb; background: linear-gradient(90deg, #f0f0f0 84%, #fff 84%); height: 15px; padding-right: 4px; }
.selwrap select { flex: 1; min-width: 0; appearance: none; border: 0; background: none; padding: 0 1px; color: #8c9092; opacity: 1; }
.mine { height: 14px; margin: 1px 1px 4px 2px; border: 1px solid #b6b9bb; background: #f4f4f4; color: #8c9092; flex: none; }
.list { flex: 1; min-height: 0; display: grid; grid-template-columns: 1fr 11px; margin-top: 2px; }
.list table { border-collapse: collapse; width: 100%; align-self: start; background: linear-gradient(#fff 60%, #f0f2f5); table-layout: fixed; }
.list th { font-weight: 400; text-align: left; height: 12px; padding: 0 0 0 2px; line-height: 11px; border-bottom: 1px solid #d5d8dc; white-space: nowrap; }
.list .c1 { width: 21px; border-right: 1px solid #e4e6ea; }
.list .c2 { width: 15px; }
.list .c2 svg { width: 11px; height: 11px; }
.list .c0 { width: 7px; border-right: 1px solid #e4e6ea; }
.list .c3 { width: 37px; border-left: 1px solid #e4e6ea; }
.c3 .tri { display: inline-block; margin: 0 0 2px 3px; color: #8c9092; }
.scroll { margin-top: 12px; border-left: 1px solid #e2e2e2; display: flex; flex-direction: column; justify-content: space-between; align-items: center; padding: 5px 0 3px; color: #8c9092; }
.scroll .tri { border-left-width: 2px; border-right-width: 2px; }
.acts { display: flex; align-items: center; gap: 4px; height: 24px; padding: 0 3px 0 2px; flex: none; }
.acts button { width: 15px; height: 19px; }
.acts .boxed { width: 18px; border: 1px solid #b6b9bb; }
.push { margin-left: auto; }
.msgs { display: flex; gap: 5px; padding: 6px 4px 2px; flex: none; }

.center { display: flex; flex-direction: column; min-width: 0; min-height: 0; }
.tabs { height: 15px; flex: none; display: flex; background: #d9d9d9; }
.tiles { width: 17px; background: #e2e2e2; color: #444c54; }
.tab { flex: 1; justify-content: flex-start; padding-left: 1px; border-left: 1px solid #e8e8e8; color: #222; }
.tab svg { color: #444c54; width: 13px; height: 13px; }
.tab.active { background: #fff; }
.tab .x { margin-left: auto; padding-right: 6px; font-size: 10px; font-weight: 700; }
.views { width: 34px; background: #e3e3e3; gap: 3px; }
.views svg { width: 18px; }
.views .tri { color: #222; border-width: 3px 2px 0; }
.canvas { flex: 1; min-height: 0; position: relative; background: linear-gradient(#fff 0 178px, #e5ebee 178px); }
.model { width: 100%; height: 100%; }
.faceL { fill: #c9caca; stroke: none; }
.faceR { fill: #9c9c9c; stroke: none; }
.gl, .gr, .edge { fill: none; }
.gl { stroke: #989999; stroke-width: 3; }
.gl.far { stroke: #b1b2b2; stroke-width: 4; }
.gl.h { stroke: #919292; stroke-width: 4; }
.gr { stroke: #848484; stroke-width: 4; }
.gr.h { stroke: #7d7d7d; stroke-width: 5; }
.edge { stroke: #7c7c7c; stroke-width: 3; }
.handle { position: absolute; width: 20px; height: 11px; background: rgba(214, 217, 219, .5); display: flex; align-items: center; justify-content: center; }
.handle::after { content: ""; width: 18px; height: 1px; background: repeating-linear-gradient(90deg, #f39a4c 0 3px, transparent 3px 5px); }
.handle.top { top: 0; left: calc(50% - 11px); }
.handle.bottom { bottom: 0; left: calc(50% - 11px); }
.handle.left, .handle.rt { width: 11px; height: 20px; top: calc(50% - 10px); }
.handle.left { left: 0; }
.handle.rt { right: 0; }
.handle.left::after, .handle.rt::after { width: 1px; height: 18px; background: repeating-linear-gradient(#f39a4c 0 3px, transparent 3px 5px); }
.viewbar { height: 13px; flex: none; display: flex; align-items: center; color: #444c54; }
.viewbar .sep { height: 13px; margin: 0 1px 0 0; }
.viewbar svg { width: 12px; height: 12px; }
.vi { width: 15px; }
.opt { width: 77px; height: 13px; padding: 0 5px 0 3px; border-right: 1px solid #b4b6b8; color: #222; }
.opt:last-child { border: 0; }
.opt svg { color: #444c54; }
.opt span { flex: 1; text-align: center; padding-left: 2px; }
.opt.dim, .opt.dim svg { color: #a4a7a9; }
.opt.dim .strong { color: #444c54; }
.opt .tri { border-width: 2px 0 2px 3px; }

.nav { display: flex; flex-direction: column; min-height: 0; border-right: 3px solid #d3d5d8; padding-left: 2px; }
.refrow { display: flex; gap: 3px; height: 17px; margin-top: 4px; flex: none; }
.refrow button { border: 1px solid #b6b9bb; }
.sq { width: 18px; }
.ref { flex: 1; padding: 0 3px 0 0; justify-content: flex-start; }
.ref svg { width: 12px; }
.ref span { color: #8c9092; flex: 1; text-align: left; }
.nav .tri.right { border-width: 2px 0 2px 3px; }
.ricons { display: flex; gap: 5px; height: 23px; align-items: center; padding-left: 2px; flex: none; }
.ricons .gapafter { margin-right: 20px; }
.ricons.second { padding-left: 22px; }
.nav .lbl { color: #6a6e70; height: 14px; line-height: 14px; flex: none; }
.slrow { display: flex; align-items: center; height: 18px; padding-left: 20px; flex: none; }
.slrow > button { width: 18px; height: 18px; border: 1px solid #b6b9bb; gap: 2px; }
.slrow svg { width: 10px; }
.slrow .thin { width: 8px; margin-left: auto; }
.sw { width: 8px; height: 8px; background: #e3e2c8; }
.sl { width: 113px; margin-left: 5px; }
.sl input { display: block; width: 100%; height: 8px; appearance: none; background: linear-gradient(#b9bcbe, #b9bcbe) 0 50% / 100% 1px no-repeat; }
.sl input::-webkit-slider-thumb { appearance: none; width: 4px; height: 7px; background: #f4f4f4; border: 1px solid #a4a7a9; border-radius: 1px 1px 2px 2px; }
.ticks { height: 2px; margin: 2px 1px 0 2px; background: repeating-linear-gradient(90deg, #b9bcbe 0 1px, transparent 1px 11px); }
.divider { border-top: 1px solid #dcdcdc; height: 7px; flex: none; }
.divider .grip { margin-top: 2px; }
.navhead { display: flex; align-items: center; gap: 1px; height: 22px; flex: none; color: #444c54; margin-right: -2px; }
.navhead button { width: 18px; height: 18px; }
.navhead .chooser { width: 27px; border: 1px solid #95999c; border-radius: 2px; background: linear-gradient(#f6f6f6, #dcdcdc); gap: 3px; }
.treebox { flex: 1; min-height: 0; display: flex; background: #fff; overflow: hidden; margin-left: -2px; }
.tree { flex: 1; list-style: none; display: flex; flex-direction: column; height: calc(100% + 3px); }
.tree li { flex: 1; min-height: 0; display: flex; align-items: center; gap: 2px; color: #111; white-space: nowrap; }
.tree svg { color: #3b8af5; width: 13px; height: 13px; }
.l0 { padding-left: 13px; }
.l1 { padding-left: 19px; }
.l2 { padding-left: 26px; }
.tree .open::before { content: ""; width: 0; height: 0; border: 2px solid #222; border-top-color: transparent; border-left-color: transparent; }
.tree .open.l0 { padding-left: 7px; }
.tree .open.l1 { padding-left: 13px; }
.vscroll { width: 10px; background: #f0f0f0; display: flex; flex-direction: column; align-items: center; padding: 4px 0; margin-right: -1px; }
.vscroll .tri { border-left-width: 2px; border-right-width: 2px; color: #333; }
.vscroll .thumb { width: 9px; flex: 195; margin: 4px 0 80px; border: 1px solid #b4b7ba; background: linear-gradient(90deg, #eee, #cfd1d3); display: flex; align-items: center; justify-content: center; }
.vscroll .thumb::after { content: ""; width: 4px; height: 5px; background: repeating-linear-gradient(#6d7072 0 1px, transparent 1px 2px); }
.navacts { display: flex; justify-content: flex-end; gap: 5px; height: 27px; align-items: center; flex: none; color: #444c54; }
.navacts .blue { color: #3b8af5; }
.navacts .pale { color: #a9c8f7; }
.navacts .red { color: #f7b3a3; }
.nav h3 { margin-left: -2px; }
.none { height: 71px; padding-top: 14px; text-align: center; flex: none; }

.status { height: 14px; flex: none; display: flex; align-items: center; background: #f1edec; border-top: 1px solid #b4b4b4; white-space: nowrap; padding-right: 24px; }
.status svg { width: 12px; height: 11px; margin-left: auto; color: #222; }
.gid { font-family: Lato, sans-serif; color: #8b8b8b; border-left: 1px solid #ddd; margin-left: 1px; padding-left: 6px; font-size: 9px; }
.gid b { font-weight: 400; color: #b9b9b9; }
```
